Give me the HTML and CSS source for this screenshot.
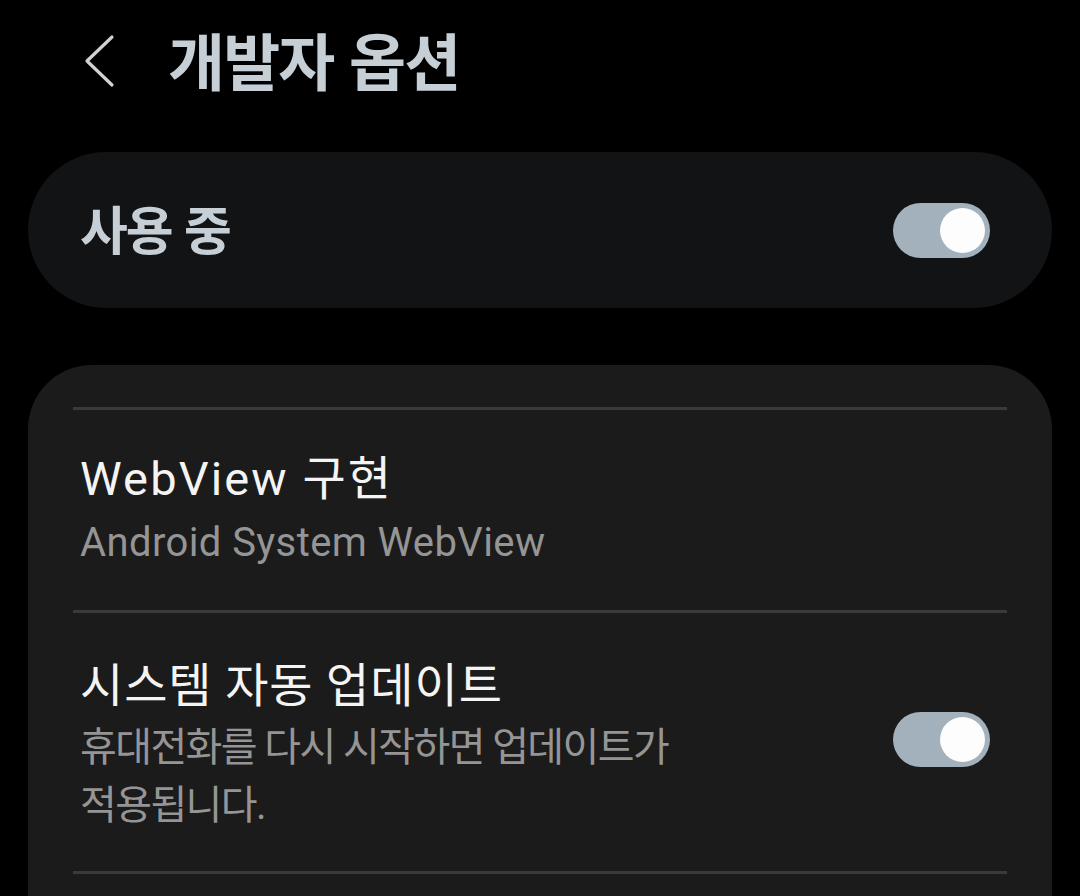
FILE: index.html
```html
<!DOCTYPE html>
<html lang="ko">
<head>
<meta charset="utf-8">
<link rel="stylesheet" href="styles.css">
</head>
<body>
<div class="screen">
  <header class="appbar">
    <span class="back">
      <svg width="34" height="56" viewBox="0 0 34 56"><path d="M29 3 L4 27 L29 51" fill="none" stroke="#cfd3d6" stroke-width="3.2" stroke-linecap="round" stroke-linejoin="round"/></svg>
    </span>
    <h1 class="title">개발자 옵션</h1>
  </header>

  <section class="master">
    <span class="master-label">사용 중</span>
    <span class="switch"><span class="knob"></span></span>
  </section>

  <section class="card">
    <div class="divider"></div>
    <div class="row row-plain">
      <div class="texts">
        <div class="row-title latin">WebView 구현</div>
        <div class="row-sub">Android System WebView</div>
      </div>
    </div>
    <div class="divider"></div>
    <div class="row row-switch">
      <div class="texts narrow">
        <div class="row-title">시스템 자동 업데이트</div>
        <div class="row-sub ko">휴대전화를 다시 시작하면 업데이트가 적용됩니다.</div>
      </div>
      <span class="switch"><span class="knob"></span></span>
    </div>
    <div class="divider"></div>
  </section>
</div>
</body>
</html>
```

FILE: styles.css
```css
html, body {
  margin: 0;
  padding: 0;
  background: #000;
}
body {
  width: 1080px;
  height: 896px;
  overflow: hidden;
  font-family: Roboto, "Noto Sans CJK KR", sans-serif;
}
.screen {
  display: flex;
  flex-direction: column;
}
.appbar {
  height: 152px;
  display: flex;
  align-items: flex-start;
  padding-left: 83px;
  box-sizing: border-box;
}
.back {
  display: block;
  margin-top: 34px;
  width: 34px;
  height: 56px;
}
.title {
  margin: 19px 0 0 51px;
  font-family: "Noto Sans CJK KR", sans-serif;
  font-weight: 700;
  font-size: 62px;
  line-height: 80px;
  letter-spacing: -0.03em;
  color: #c6ced6;
}
.master {
  margin: 0 28px;
  height: 156px;
  border-radius: 78px;
  background: #121314;
  display: flex;
  align-items: center;
  justify-content: space-between;
  padding: 0 62px 0 52px;
  box-sizing: border-box;
}
.master-label {
  font-family: "Noto Sans CJK KR", sans-serif;
  font-weight: 700;
  font-size: 52px;
  letter-spacing: -0.04em;
  color: #c6ced6;
  margin-top: -6px;
}
.switch {
  width: 97px;
  height: 55px;
  border-radius: 28px;
  background: #a3b1bc;
  position: relative;
  flex-shrink: 0;
}
.knob {
  position: absolute;
  top: 5px;
  right: 5px;
  width: 45px;
  height: 45px;
  border-radius: 50%;
  background: #fdfdfd;
}
.card {
  margin: 57px 28px 0;
  background: #1b1b1b;
  border-radius: 64px 64px 0 0;
  padding: 42px 45px 0;
  height: 560px;
  box-sizing: border-box;
}
.divider {
  height: 3px;
  background: #3a3a3a;
}
.row {
  display: flex;
  align-items: center;
  justify-content: space-between;
  padding: 0 17px 0 7px;
}
.row-plain {
  height: 200px;
}
.row-plain .row-sub {
  margin-top: 4px;
}
.row-switch {
  height: 258px;
  padding-top: 6px;
  box-sizing: border-box;
}
.row-switch .switch {
  margin-top: -12px;
}
.texts {
  display: flex;
  flex-direction: column;
}
.narrow {
  width: 600px;
}
.row-title {
  font-size: 47px;
  line-height: 62px;
  color: #f4f4f4;
  letter-spacing: 0.02em;
}
.row-title.latin {
  letter-spacing: 0.045em;
}
.row-sub {
  font-size: 40px;
  line-height: 58px;
  color: #959595;
  letter-spacing: 0.01em;
}
.row-sub.ko {
  letter-spacing: -0.04em;
  margin-top: 2px;
}
```
